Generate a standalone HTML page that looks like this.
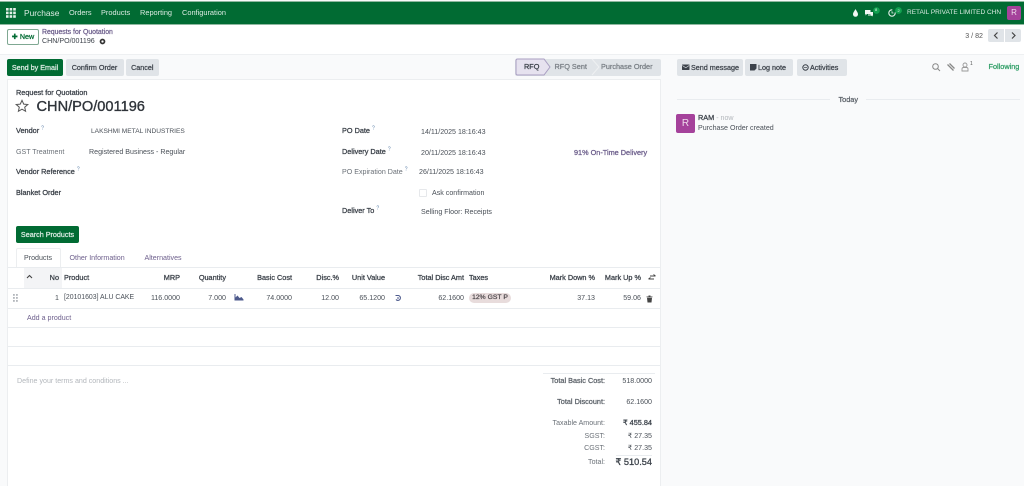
<!DOCTYPE html>
<html><head><meta charset="utf-8"><style>
html{margin:0;padding:0;width:1024px;height:486px;overflow:hidden;background:#f9fafb}
body{margin:0;padding:0;width:1024px;height:486px;overflow:hidden;background:#f9fafb;font-family:"Liberation Sans","DejaVu Sans",sans-serif;font-size:7.1px;color:#4a5058;position:relative;filter:blur(.35px)}
.a,.t,.r{position:absolute}
.t,.r{white-space:nowrap;line-height:10px}
.r{text-align:right}
.b{font-size:7.3px;-webkit-text-stroke:.28px currentColor;color:#3c424a}
.g{color:#6b7178}
.p{color:#6d5f8c}
.btn{position:absolute;border-radius:2px;background:#e0e4e8;color:#3c424a;font-size:7.2px;-webkit-text-stroke:.25px currentColor;text-align:center;height:17px;line-height:17px;white-space:nowrap}
.line{position:absolute;height:1px;background:#e9ecef}
.nav{color:#dcebe3;top:8px;font-size:7.400px}
sup{font-size:5px;color:#5b7fa8;line-height:0;-webkit-text-stroke:0}
</style></head><body>
<div class="a" style="left:0;top:1px;width:1024px;height:24px;background:#016b33;border-top:1px solid #8fb8a0;border-bottom:1px solid #8fb8a0;box-sizing:border-box"></div>
<svg class="a" style="left:6px;top:8px" width="10" height="10" fill="#e4f0e9"><rect x="0" y="0" width="2.6" height="2.6"/><rect x="3.6" y="0" width="2.6" height="2.6"/><rect x="7.2" y="0" width="2.6" height="2.6"/><rect x="0" y="3.6" width="2.6" height="2.6"/><rect x="3.6" y="3.6" width="2.6" height="2.6"/><rect x="7.2" y="3.6" width="2.6" height="2.6"/><rect x="0" y="7.2" width="2.6" height="2.6"/><rect x="3.6" y="7.2" width="2.6" height="2.6"/><rect x="7.2" y="7.2" width="2.6" height="2.6"/></svg>
<div class="t" style="left:24px;top:8px;color:#dcebe3;font-size:8.400px">Purchase</div>
<div class="t nav" style="left:69px">Orders</div>
<div class="t nav" style="left:101px">Products</div>
<div class="t nav" style="left:140px">Reporting</div>
<div class="t nav" style="left:182px">Configuration</div>
<svg class="a" style="left:851px;top:8px" width="9" height="10"><path d="M4.500 1C3.500 3 2 4.500 2 6.300A2.500 2.500 0 0 0 7 6.300C7 4.500 5.500 3 4.500 1Z" fill="#f2f7f4"/></svg>
<svg class="a" style="left:864px;top:7px" width="18" height="11"><path d="M1 3H6.500V7H3L1.500 8.500V7H1Z" fill="#f2f7f4"/><path d="M6.500 5H9V8.500H8.500V9.500L7 8.500H4V7.500H6.500Z" fill="#f2f7f4"/><circle cx="12.500" cy="3.500" r="3.300" fill="#12a150"/></svg>
<div class="t" style="left:875px;top:6px;font-size:4px;color:#dff3e7;line-height:7px">8</div>
<svg class="a" style="left:887px;top:7px" width="18" height="11"><circle cx="5" cy="6" r="3.200" fill="none" stroke="#e8f1ec" stroke-width="1.100" stroke-dasharray="15 4"/><path d="M5 4.300V6H6.500" fill="none" stroke="#e8f1ec" stroke-width=".8"/><circle cx="11.500" cy="3.500" r="3.400" fill="#12a150"/></svg>
<div class="t" style="left:897.500px;top:6.500px;font-size:4px;color:#dff3e7;line-height:7px">2</div>
<div class="t" style="left:907px;top:8px;color:#dcebe3;font-size:6.500px">RETAIL PRIVATE LIMITED CHN</div>
<div class="a" style="left:1007px;top:6px;width:14px;height:14px;background:#a5429b;border-radius:2px;color:#eedcec;text-align:center;line-height:14px;font-size:8px">R</div>

<div class="a" style="left:0;top:25px;width:1024px;height:29px;background:#fff;border-bottom:1px solid #eef0f2"></div>
<div class="a" style="left:7px;top:29px;width:32px;height:16px;box-sizing:border-box;border:1px solid #7fa892;border-radius:2px;background:#fff;color:#016b33;font-size:7.200px;-webkit-text-stroke:.25px currentColor;text-align:center;line-height:14px">✚ New</div>
<div class="t p" style="left:42px;top:28px;color:#6d5f8c;font-size:6.900px;-webkit-text-stroke:.25px currentColor">Requests for Quotation</div>
<div class="t" style="left:42px;top:36px;color:#3c424a">CHN/PO/001196</div>
<svg class="a" style="left:99px;top:37.500px" width="7" height="7"><circle cx="3.500" cy="3.500" r="2" fill="none" stroke="#333" stroke-width="1.700"/></svg>
<div class="r" style="right:41px;top:30.500px;width:60px;color:#555">3 / 82</div>
<div class="a" style="left:988px;top:29px;width:16px;height:13px;background:#e0e4e8;border-radius:2px 0 0 2px"></div>
<div class="a" style="left:1005px;top:29px;width:16px;height:13px;background:#e0e4e8;border-radius:0 2px 2px 0"></div>
<svg class="a" style="left:988px;top:29px" width="33" height="13" fill="none" stroke="#444" stroke-width="1.200"><path d="M9.500 3.500L6.500 6.500L9.500 9.500"/><path d="M24 3.500L27 6.500L24 9.500"/></svg>

<div class="btn" style="left:7px;top:58.500px;width:56px;background:#016b33;color:#dcebe3">Send by Email</div>
<div class="btn" style="left:65.500px;top:58.500px;width:58px">Confirm Order</div>
<div class="btn" style="left:126px;top:58.500px;width:32.500px">Cancel</div>

<div class="a" style="left:515px;top:58.500px;width:146px;height:17px;background:#e0e4e8;border-radius:2px"></div>
<svg class="a" style="left:515px;top:58px" width="146" height="18"><path d="M1 2.500Q1 1 2.500 1H29L35 9L29 17H2.500Q1 17 1 15.500Z" fill="#e6e2ef" stroke="#a99fc2" stroke-width="1"/><path d="M77 1L84 9L77 17" fill="none" stroke="#eef0f2" stroke-width="1"/></svg>
<div class="t b" style="left:524px;top:62px">RFQ</div>
<div class="t b" style="left:554.500px;top:62px;color:#7c8288">RFQ Sent</div>
<div class="t b" style="left:601px;top:62px;color:#7c8288">Purchase Order</div>

<div class="a" style="left:7px;top:79px;width:654px;height:407px;background:#fff;border:1px solid #eceef0;border-bottom:0;box-sizing:border-box"></div>
<div class="t b" style="left:16px;top:88px">Request for Quotation</div>
<svg class="a" style="left:15px;top:99px" width="14" height="14"><path d="M7 1.300L8.700 5.100L12.800 5.500L9.700 8.200L10.600 12.300L7 10.200L3.400 12.300L4.300 8.200L1.200 5.500L5.300 5.100Z" fill="none" stroke="#555" stroke-width="1"/></svg>
<div class="t" style="left:36.500px;top:99px;font-size:14.600px;line-height:16px;color:#2f343a;-webkit-text-stroke:.35px currentColor">CHN/PO/001196</div>

<div class="t b" style="left:16px;top:126px">Vendor <sup>?</sup></div>
<div class="t" style="left:91px;top:127px;font-size:6.600px">LAKSHMI METAL INDUSTRIES</div>
<div class="t g" style="left:16px;top:147px">GST Treatment</div>
<div class="t" style="left:89px;top:147px">Registered Business - Regular</div>
<div class="t b" style="left:16px;top:167px">Vendor Reference <sup>?</sup></div>
<div class="t b" style="left:16px;top:188px">Blanket Order</div>
<div class="btn" style="left:16px;top:226px;width:63px;background:#016b33;color:#dcebe3">Search Products</div>

<div class="t b" style="left:342px;top:126px">PO Date <sup>?</sup></div>
<div class="t" style="left:421px;top:127px">14/11/2025 18:16:43</div>
<div class="t b" style="left:342px;top:147px">Delivery Date <sup>?</sup></div>
<div class="t" style="left:421px;top:148px">20/11/2025 18:16:43</div>
<div class="t b" style="left:574px;top:148px;color:#6d5f8c">91% On-Time Delivery</div>
<div class="t g" style="left:342px;top:167px">PO Expiration Date <sup>?</sup></div>
<div class="t" style="left:419px;top:167px">26/11/2025 18:16:43</div>
<div class="a" style="left:419px;top:189px;width:6px;height:6px;border:1px solid #e6e8eb;border-radius:1px;background:#fff"></div>
<div class="t" style="left:432px;top:188px">Ask confirmation</div>
<div class="t b" style="left:342px;top:206px">Deliver To <sup>?</sup></div>
<div class="t" style="left:421px;top:207px">Selling Floor: Receipts</div>

<div class="a" style="left:16px;top:248px;width:45px;height:20px;box-sizing:border-box;border:1px solid #eceef0;border-bottom:0;border-radius:2px 2px 0 0;background:#fff"></div>
<div class="t" style="left:24px;top:253px">Products</div>
<div class="t p" style="left:69.500px;top:253px">Other Information</div>
<div class="t p" style="left:144.500px;top:253px">Alternatives</div>
<div class="line" style="left:8px;top:267px;width:652px"></div>
<div class="a" style="left:24px;top:268px;width:38px;height:20px;background:#f3f4f6"></div>
<svg class="a" style="left:26px;top:274px" width="7" height="6" fill="none" stroke="#444" stroke-width="1.100"><path d="M1 4L3.500 1.500L6 4"/></svg>
<div class="r b" style="right:965px;top:273px;width:30px">No</div>
<div class="t b" style="left:64px;top:273px">Product</div>
<div class="r b" style="right:844px;top:273px;width:40px">MRP</div>
<div class="r b" style="right:798px;top:273px;width:50px">Quantity</div>
<div class="r b" style="right:732px;top:273px;width:60px">Basic Cost</div>
<div class="r b" style="right:685px;top:273px;width:40px">Disc.%</div>
<div class="r b" style="right:639px;top:273px;width:50px">Unit Value</div>
<div class="r b" style="right:560px;top:273px;width:70px">Total Disc Amt</div>
<div class="t b" style="left:469px;top:273px">Taxes</div>
<div class="r b" style="right:429px;top:273px;width:70px">Mark Down %</div>
<div class="r b" style="right:383px;top:273px;width:60px">Mark Up %</div>
<svg class="a" style="left:648px;top:274px" width="8" height="7" stroke="#444" stroke-width=".9" fill="none"><path d="M2 2H7.500M5.500 .5L7.500 2M6 5H.5M2.500 3.500L.5 5"/></svg>
<div class="line" style="left:8px;top:288px;width:652px"></div>

<svg class="a" style="left:13px;top:294px" width="6" height="8" fill="#b3b7bc"><rect x="0" y="0" width="1.800" height="1.800"/><rect x="3" y="0" width="1.800" height="1.800"/><rect x="0" y="3" width="1.800" height="1.800"/><rect x="3" y="3" width="1.800" height="1.800"/><rect x="0" y="6" width="1.800" height="1.800"/><rect x="3" y="6" width="1.800" height="1.800"/></svg>
<div class="r" style="right:965px;top:292.500px;width:20px">1</div>
<div class="t" style="left:64px;top:293px;font-size:6.900px">[20101603] ALU CAKE</div>
<div class="r" style="right:844px;top:292.500px;width:50px">116.0000</div>
<div class="r" style="right:798px;top:292.500px;width:50px">7.000</div>
<svg class="a" style="left:234px;top:294px" width="10" height="7"><path d="M.5 0V6.500H9.500V5.500L7.500 3L5.500 4L3.500 1.500L1.500 3.500V0Z" fill="#4d5a8c"/></svg>
<div class="r" style="right:732px;top:292.500px;width:50px">74.0000</div>
<div class="r" style="right:685px;top:292.500px;width:40px">12.00</div>
<div class="r" style="right:639px;top:292.500px;width:50px">65.1200</div>
<svg class="a" style="left:394px;top:294px" width="8" height="8" fill="none" stroke="#4d5a8c" stroke-width="1.100"><path d="M1.500 1.500H4.500A2.500 2.500 0 1 1 2 5.500M3 4H5"/></svg>
<div class="r" style="right:560px;top:292.500px;width:60px">62.1600</div>
<div class="a" style="left:469px;top:293px;width:42px;height:10px;border-radius:5px;background:#e8dcdc;text-align:center;line-height:10px;font-size:6.800px;-webkit-text-stroke:.2px currentColor;color:#4a4448">12% GST P</div>
<div class="r" style="right:429px;top:292.500px;width:50px">37.13</div>
<div class="r" style="right:383px;top:292.500px;width:50px">59.06</div>
<svg class="a" style="left:646px;top:295px" width="7" height="8"><path d="M.5 1.500H6.500V2.300H.5ZM2.500 .5H4.500V1.500H2.500ZM1 2.800H6L5.500 7.500H1.500Z" fill="#444"/></svg>
<div class="line" style="left:8px;top:308px;width:652px"></div>
<div class="t p" style="left:27px;top:313px">Add a product</div>
<div class="line" style="left:8px;top:327px;width:652px"></div>
<div class="line" style="left:8px;top:346px;width:652px"></div>
<div class="line" style="left:8px;top:365px;width:652px"></div>

<div class="t" style="left:17px;top:376px;color:#b3b7bc">Define your terms and conditions ...</div>
<div class="line" style="left:543px;top:373px;width:112px"></div>
<div class="r b" style="right:419px;top:376px;width:90px;color:#5d636a">Total Basic Cost:</div>
<div class="r" style="right:372px;top:376px;width:50px">518.0000</div>
<div class="r b" style="right:419px;top:397px;width:90px;color:#5d636a">Total Discount:</div>
<div class="r" style="right:372px;top:397px;width:50px">62.1600</div>
<div class="r g" style="right:419px;top:418px;width:90px">Taxable Amount:</div>
<div class="r b" style="right:372px;top:418px;width:50px">₹ 455.84</div>
<div class="r g" style="right:419px;top:431px;width:90px">SGST:</div>
<div class="r" style="right:372px;top:431px;width:50px">₹ 27.35</div>
<div class="r g" style="right:419px;top:443px;width:90px">CGST:</div>
<div class="r" style="right:372px;top:443px;width:50px">₹ 27.35</div>
<div class="line" style="left:616px;top:455px;width:36px"></div>
<div class="r g" style="right:419px;top:457px;width:90px">Total:</div>
<div class="r" style="right:372px;top:457px;width:60px;font-size:9.200px;color:#3c424a;-webkit-text-stroke:.3px currentColor">₹ 510.54</div>

<div class="btn" style="left:677px;top:58.500px;width:65.500px;text-align:left;text-indent:14px">Send message</div>
<svg class="a" style="left:682px;top:63.500px" width="8" height="7"><rect x="0" y=".5" width="7.500" height="5.500" rx=".5" fill="#3c424a"/><path d="M.3 1.500L3.750 3.800L7.200 1.500" fill="none" stroke="#e0e4e8" stroke-width=".6"/></svg>
<div class="btn" style="left:745px;top:58.500px;width:48px;text-align:left;text-indent:13px">Log note</div>
<svg class="a" style="left:750px;top:63.500px" width="7" height="7"><path d="M0 0H6.500V4.500L4.500 6.500H0Z" fill="#3c424a"/></svg>
<div class="btn" style="left:797px;top:58.500px;width:50px;text-align:left;text-indent:13px">Activities</div>
<svg class="a" style="left:802px;top:63.500px" width="7" height="7" fill="none" stroke="#3c424a"><circle cx="3.500" cy="3.500" r="2.700" stroke-width="1"/><path d="M2 3.500H5" stroke-width=".7"/></svg>
<svg class="a" style="left:931px;top:62px" width="10" height="10" fill="none" stroke="#888" stroke-width="1"><circle cx="4.500" cy="4.500" r="2.800"/><path d="M6.500 6.500L9 9"/></svg>
<svg class="a" style="left:946px;top:62px" width="10" height="10" fill="none" stroke="#888" stroke-width="1.300"><path d="M1.500 2.500L7.500 8.500M3.500 1.500L8.500 6.500"/></svg>
<svg class="a" style="left:961px;top:62px" width="8" height="10" fill="none" stroke="#999" stroke-width=".9"><circle cx="4" cy="3" r="2"/><path d="M1 9V7Q1 5.500 2.500 5.500H5.500Q7 5.500 7 7V9Z"/></svg>
<div class="t" style="left:970px;top:59px;font-size:5px;color:#555">1</div>
<div class="t b" style="left:988.500px;top:62px;color:#2f9e66">Following</div>
<div class="line" style="left:677px;top:99px;width:153px"></div>
<div class="t b" style="left:838.500px;top:95px;color:#5d636a">Today</div>
<div class="line" style="left:866px;top:99px;width:154px"></div>
<div class="a" style="left:676px;top:114px;width:19px;height:19px;background:#a5429b;border-radius:2px;color:#eedcec;text-align:center;line-height:19px;font-size:10px">R</div>
<div class="t" style="left:698px;top:113px"><span class="b">RAM</span> <span style="color:#b3b7bc">- now</span></div>
<div class="t" style="left:698px;top:123px">Purchase Order created</div>
</body></html>
